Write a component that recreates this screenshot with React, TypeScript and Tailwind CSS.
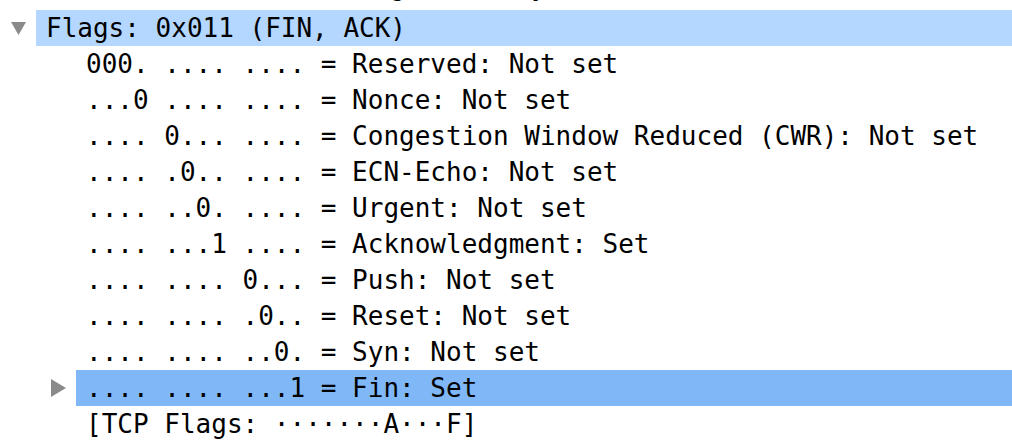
type Row = {
  level: number;
  text: string;
  toggle?: 'open' | 'closed';
  highlight?: 'light' | 'strong';
  lift?: boolean;
};

const ROWS: Row[] = [
  { level: 1, text: '0101 .... = Header Length: 20 bytes (5)', lift: true },
  { level: 1, text: 'Flags: 0x011 (FIN, ACK)', toggle: 'open', highlight: 'light' },
  { level: 2, text: '000. .... .... = Reserved: Not set' },
  { level: 2, text: '...0 .... .... = Nonce: Not set' },
  { level: 2, text: '.... 0... .... = Congestion Window Reduced (CWR): Not set' },
  { level: 2, text: '.... .0.. .... = ECN-Echo: Not set' },
  { level: 2, text: '.... ..0. .... = Urgent: Not set' },
  { level: 2, text: '.... ...1 .... = Acknowledgment: Set' },
  { level: 2, text: '.... .... 0... = Push: Not set' },
  { level: 2, text: '.... .... .0.. = Reset: Not set' },
  { level: 2, text: '.... .... ..0. = Syn: Not set' },
  { level: 2, text: '.... .... ...1 = Fin: Set', toggle: 'closed', highlight: 'strong' },
  { level: 2, text: '[TCP Flags: \u00b7\u00b7\u00b7\u00b7\u00b7\u00b7\u00b7A\u00b7\u00b7\u00b7F]' },
];

function Toggle({ state }: { state?: 'open' | 'closed' }) {
  if (!state) return null;
  if (state === 'open') {
    return (
      <svg width="15" height="13" viewBox="0 0 15 13">
        <polygon points="0,0 15,0 7.5,13" fill="#8a8a8a" />
      </svg>
    );
  }
  return (
    <svg width="15" height="18" viewBox="0 0 15 18">
      <polygon points="0,0 15,9 0,18" fill="#8a8a8a" />
    </svg>
  );
}

function TreeRow({ row }: { row: Row }) {
  const bg =
    row.highlight === 'light' ? 'bg-[#b3d7ff]' : row.highlight === 'strong' ? 'bg-[#7fb7f7]' : '';
  return (
    <div className="flex h-9 items-stretch overflow-hidden">
      {row.level === 2 && <div className="w-10 shrink-0" />}
      <div className="flex w-9 shrink-0 items-center justify-center">
        <Toggle state={row.toggle} />
      </div>
      <div
        className={`flex flex-1 items-center whitespace-pre pl-[10px] ${row.lift ? 'pb-[12px]' : ''} ${bg}`}
      >
        {row.text}
      </div>
    </div>
  );
}

export default function App() {
  return (
    <div
      className="h-[442px] w-[1012px] overflow-hidden bg-white text-[26px] leading-9 text-black"
      style={{ fontFamily: '"DejaVu Sans Mono", Menlo, monospace' }}
    >
      <div className="-mt-[26px]">
        {ROWS.map((r, i) => (
          <TreeRow key={i} row={r} />
        ))}
      </div>
    </div>
  );
}
